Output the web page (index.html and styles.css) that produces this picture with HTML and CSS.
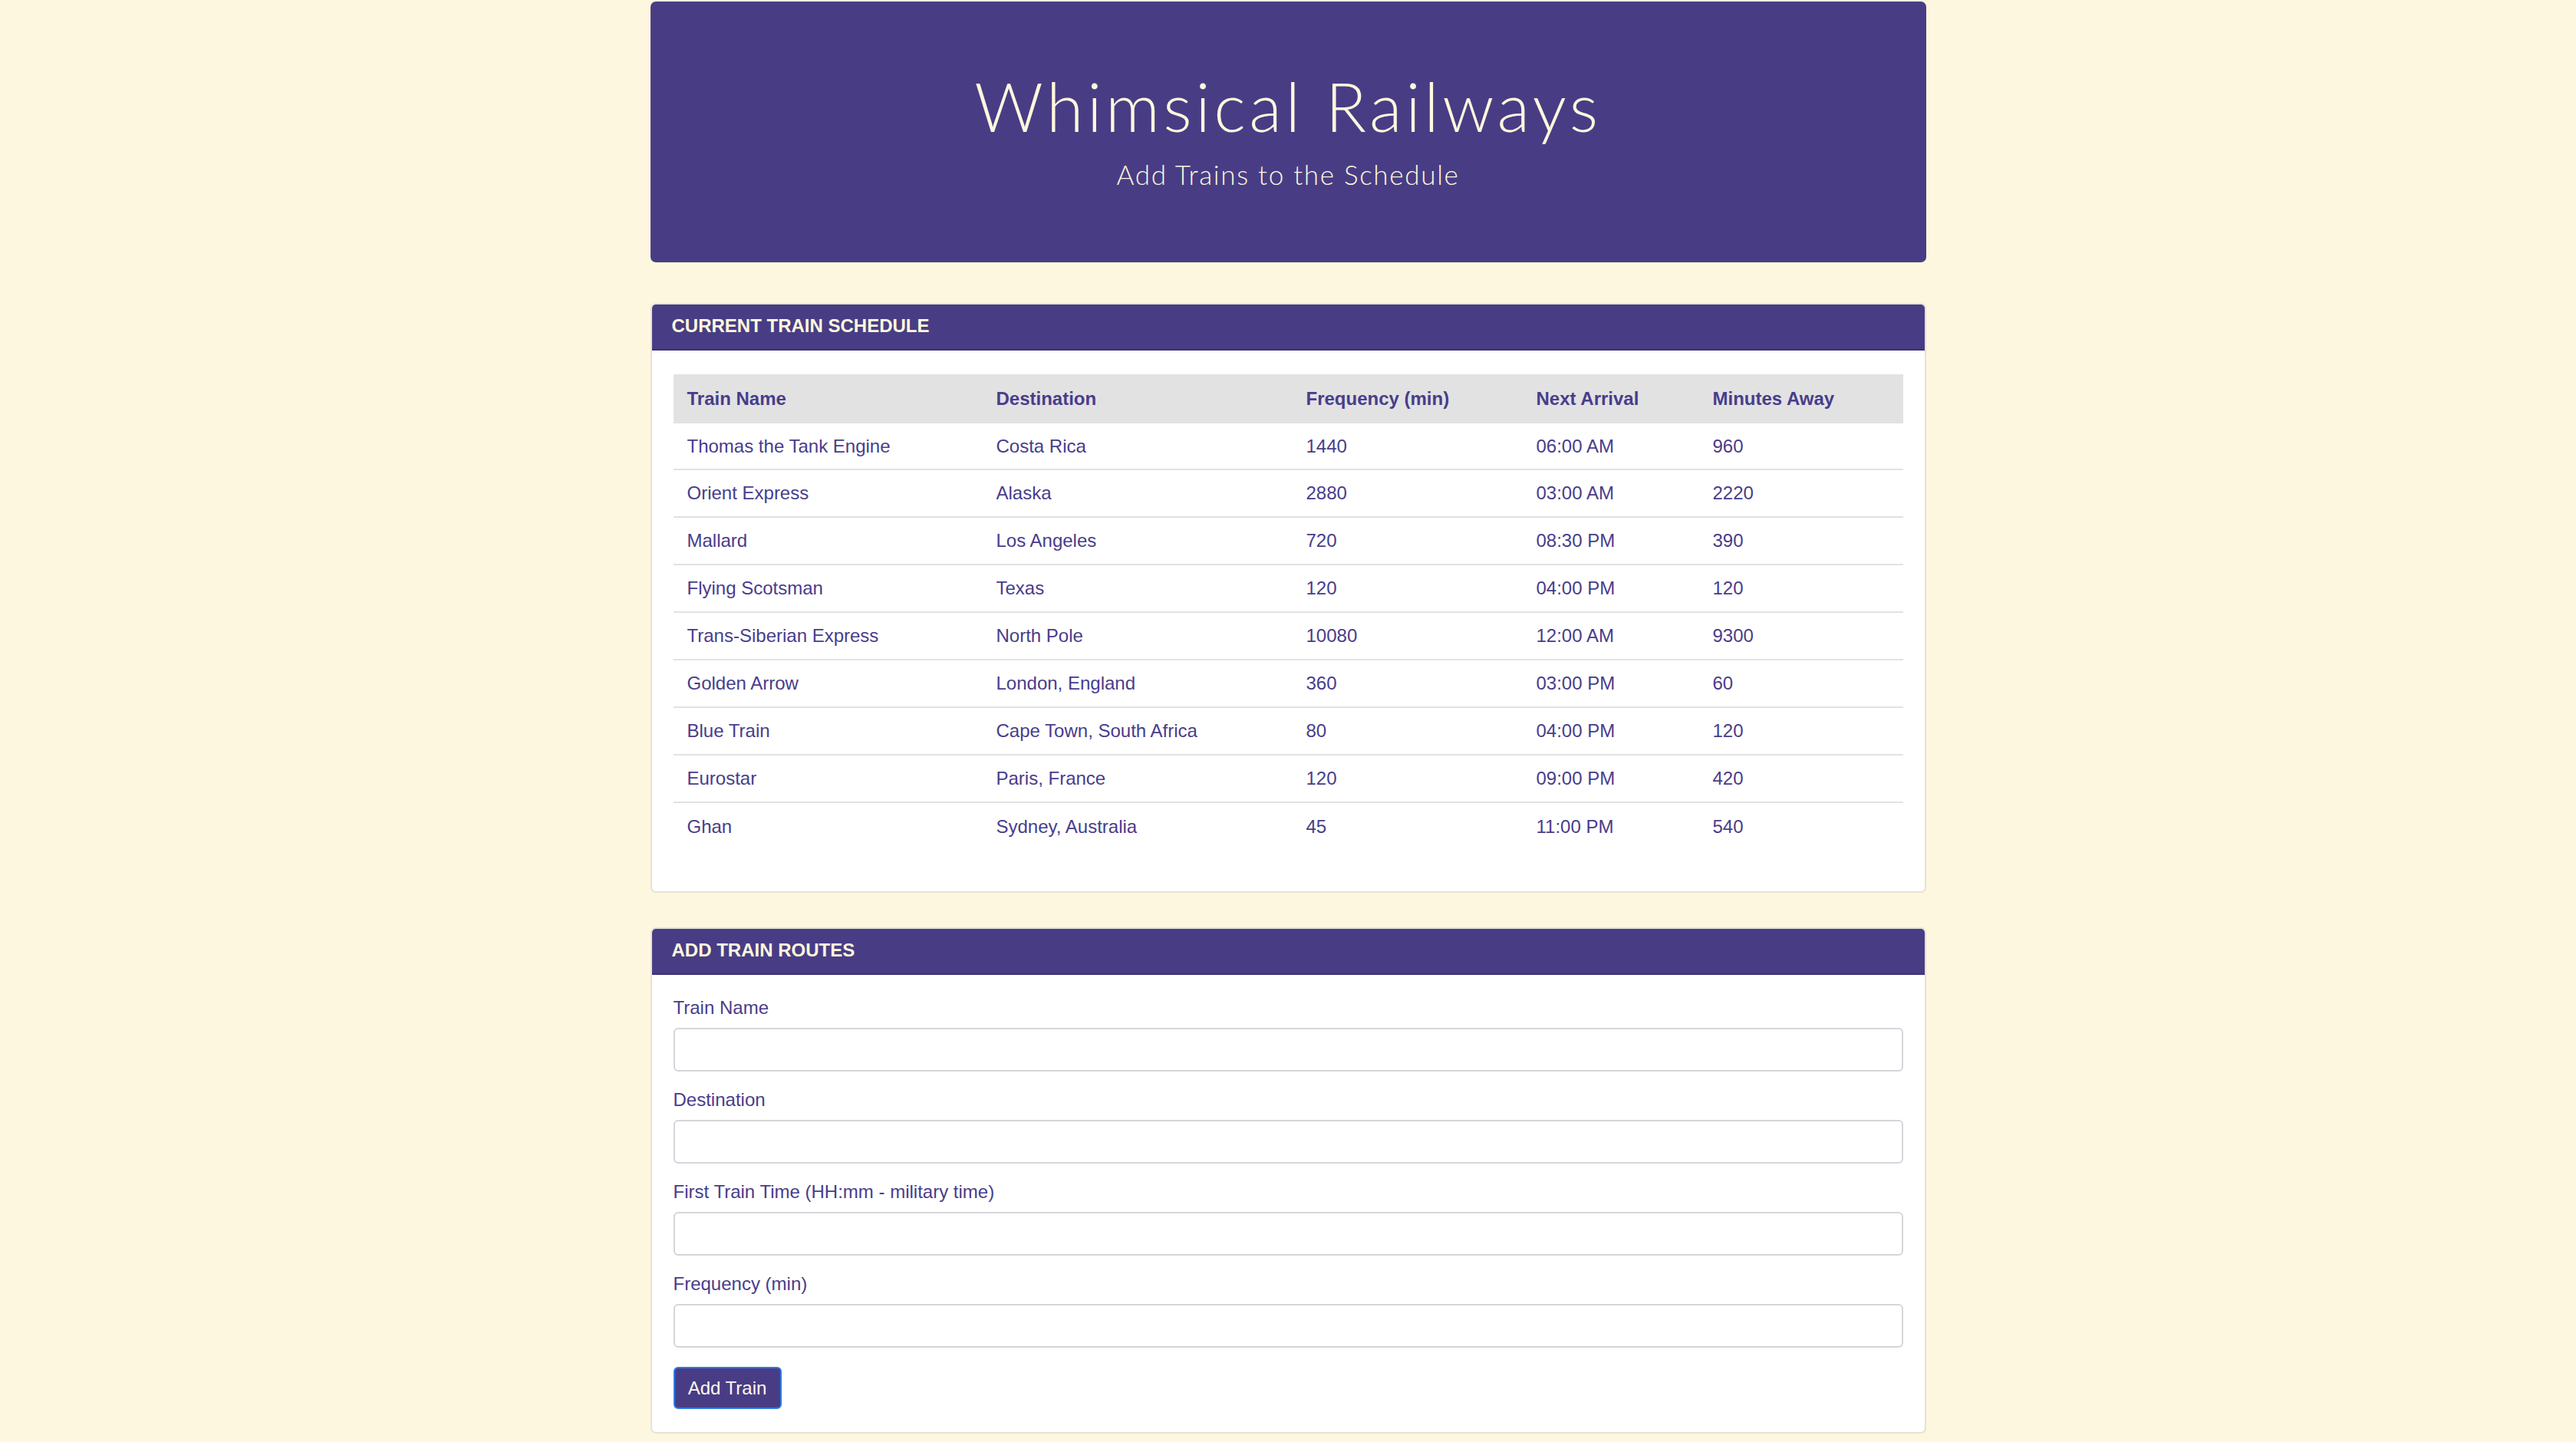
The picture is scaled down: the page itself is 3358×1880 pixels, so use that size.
FILE: index.html
```html
<!DOCTYPE html>
<html lang="en">
<head>
<meta charset="utf-8">
<title>Whimsical Railways</title>
<link rel="stylesheet" href="styles.css">
</head>
<body>
<div class="container">
  <header class="jumbotron">
    <h1 class="title">Whimsical Railways</h1>
    <p class="subtitle">Add Trains to the Schedule</p>
  </header>

  <section class="card schedule-card">
    <div class="card-header">CURRENT TRAIN SCHEDULE</div>
    <div class="card-body table-body">
      <table class="schedule">
        <thead>
          <tr>
            <th class="c-name">Train Name</th>
            <th class="c-dest">Destination</th>
            <th class="c-freq">Frequency (min)</th>
            <th class="c-next">Next Arrival</th>
            <th class="c-away">Minutes Away</th>
          </tr>
        </thead>
        <tbody>
          <tr><td>Thomas the Tank Engine</td><td>Costa Rica</td><td>1440</td><td>06:00 AM</td><td>960</td></tr>
          <tr><td>Orient Express</td><td>Alaska</td><td>2880</td><td>03:00 AM</td><td>2220</td></tr>
          <tr><td>Mallard</td><td>Los Angeles</td><td>720</td><td>08:30 PM</td><td>390</td></tr>
          <tr><td>Flying Scotsman</td><td>Texas</td><td>120</td><td>04:00 PM</td><td>120</td></tr>
          <tr><td>Trans-Siberian Express</td><td>North Pole</td><td>10080</td><td>12:00 AM</td><td>9300</td></tr>
          <tr><td>Golden Arrow</td><td>London, England</td><td>360</td><td>03:00 PM</td><td>60</td></tr>
          <tr><td>Blue Train</td><td>Cape Town, South Africa</td><td>80</td><td>04:00 PM</td><td>120</td></tr>
          <tr><td>Eurostar</td><td>Paris, France</td><td>120</td><td>09:00 PM</td><td>420</td></tr>
          <tr><td>Ghan</td><td>Sydney, Australia</td><td>45</td><td>11:00 PM</td><td>540</td></tr>
        </tbody>
      </table>
    </div>
  </section>

  <section class="card form-card">
    <div class="card-header">ADD TRAIN ROUTES</div>
    <div class="card-body form-body">
      <form class="train-form">
        <div class="form-group">
          <label for="train-name">Train Name</label>
          <input id="train-name" class="form-control" type="text">
        </div>
        <div class="form-group">
          <label for="destination">Destination</label>
          <input id="destination" class="form-control" type="text">
        </div>
        <div class="form-group">
          <label for="first-time">First Train Time (HH:mm - military time)</label>
          <input id="first-time" class="form-control" type="text">
        </div>
        <div class="form-group last">
          <label for="frequency">Frequency (min)</label>
          <input id="frequency" class="form-control" type="text">
        </div>
        <button type="button" class="btn">Add Train</button>
      </form>
    </div>
  </section>
</div>
</body>
</html>
```

FILE: styles.css
```css
* {
  box-sizing: border-box;
}

html, body {
  margin: 0;
  padding: 0;
}

body {
  background: #fef7df;
  color: #483d8b;
  font-family: "Liberation Sans", Arial, Helvetica, sans-serif;
  font-size: 24px;
  line-height: 1.5;
  height: 1880px;
  overflow: hidden;
}

.container {
  width: 1663px;
  margin: 0 auto;
  padding-top: 2px;
}

.jumbotron {
  background: #483d85;
  border-radius: 7px;
  height: 340px;
  padding-top: 84px;
  text-align: center;
  color: #fff8dc;
  font-family: "Lato", "Open Sans", sans-serif;
  font-weight: 300;
}

.title {
  margin: 0;
  font-size: 88px;
  font-weight: 300;
  line-height: 1.2;
  letter-spacing: 4.5px;
}

.subtitle {
  margin: 14px 0 0;
  font-size: 35px;
  line-height: 1.2;
  font-weight: 300;
  letter-spacing: 1.7px;
}

.card {
  background: #fff;
  border: 2px solid #e6e2d6;
  border-radius: 7px;
  overflow: hidden;
}

.schedule-card {
  margin-top: 53px;
}

.form-card {
  margin-top: 45px;
}

.card-header {
  background: #483d85;
  color: #fff8dc;
  font-weight: 700;
  font-size: 24px;
  height: 62px;
  display: flex;
  align-items: center;
  padding: 0 28px;
  border-bottom: 2px solid #3c3374;
  margin: -2px -2px 0;
}

.card-body {
  padding: 31px 28px 30px;
}

.schedule {
  width: 100%;
  border-collapse: collapse;
  table-layout: fixed;
  margin-bottom: 24px;
}

.schedule th,
.schedule td {
  text-align: left;
  padding: 0 18px;
  font-size: 24px;
  line-height: 36px;
  white-space: nowrap;
}

.schedule thead th {
  background: #e2e2e3;
  font-weight: 700;
  height: 64px;
}

.schedule tbody td {
  border-top: 2px solid #dfe2e6;
  height: 62px;
}

.schedule tbody tr:first-child td {
  border-top: none;
  height: 60px;
}

.c-name { width: 403px; }
.c-dest { width: 404px; }
.c-freq { width: 300px; }
.c-next { width: 230px; }
.c-away { width: auto; }

.form-body {
  padding-top: 25px;
}

.form-group {
  margin-bottom: 19px;
}

.form-group.last {
  margin-bottom: 25px;
}

.form-group label {
  display: block;
  font-size: 24px;
  line-height: 36px;
  margin-bottom: 8px;
  color: #483d8b;
}

.form-control {
  display: block;
  width: 100%;
  height: 57px;
  border: 2px solid #d3d6da;
  border-radius: 6px;
  background: #fff;
  font: inherit;
  padding: 0 18px;
}

.btn {
  display: block;
  height: 55px;
  width: 141px;
  padding: 0;
  background: #483d85;
  color: #fff8ee;
  border: 2px solid #2f7be6;
  border-radius: 6px;
  font-family: "Liberation Sans", Arial, sans-serif;
  font-size: 24px;
  line-height: 1;
  text-align: center;
}
```
